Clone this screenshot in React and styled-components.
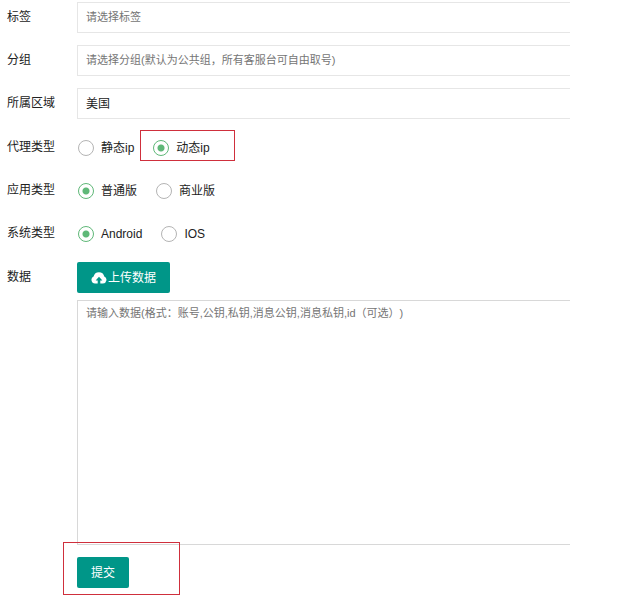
import React from "react";
import styled, { createGlobalStyle, css } from "styled-components";

const GlobalStyle = createGlobalStyle`
  *, *::before, *::after { box-sizing: border-box; }
  body {
    margin: 0;
    background: #fff;
    color: #222;
    font: 12px/16px "Liberation Sans", "Noto Sans CJK SC", sans-serif;
  }
  input, select, textarea, button { font: inherit; color: inherit; }
`;

const Form = styled.form`
  display: flex;
  flex-direction: column;
  gap: 12px;
  padding: 2px 60px 20px 7px;
`;

const Group = styled.div`
  display: flex;
  flex-direction: column;
  gap: 12px;
  padding: 1px 0;
`;

const Row = styled.div`
  display: grid;
  grid-template-columns: 70px minmax(0, 1fr);
  align-items: start;
`;

const caption = css`
  line-height: 30px;
  white-space: nowrap;
`;

const Label = styled.label`
  ${caption}
`;

const Caption = styled.span`
  ${caption}
`;

const field = css`
  display: block;
  width: 100%;
  margin: 0;
  border: 1px solid #e6e6e6;
  border-right: 0;
  border-radius: 0;
  background: #fff;
  outline: none;
  text-spacing-trim: space-all;
  &::placeholder {
    color: #757575;
    font-size: 11px;
    opacity: 1;
  }
`;

const TextField = styled.input`
  ${field}
  height: 31px;
  padding: 0 8px 2px;
`;

const DataColumn = styled.div`
  display: flex;
  flex-direction: column;
  align-items: flex-start;
  gap: 7px;
`;

const DataArea = styled.textarea`
  ${field}
  height: 245px;
  padding: 4px 8px;
  border-color: #d8d8d8;
  resize: none;
`;

const Options = styled.div`
  display: flex;
  align-items: center;
  gap: 19px;
  min-height: 31px;
  padding-left: 1px;
`;

const Option = styled.label`
  position: relative;
  display: flex;
  align-items: center;
  gap: 7px;
  white-space: nowrap;
`;

const Radio = styled.input`
  appearance: none;
  width: 16px;
  height: 16px;
  margin: 0;
  border: 1px solid #b4b4b4;
  border-radius: 50%;
  &:checked {
    border-color: #5fb878;
    background: radial-gradient(circle, #5fb878 3px, transparent 4px);
  }
`;

const Button = styled.button`
  display: inline-flex;
  align-items: center;
  gap: 1px;
  height: 31px;
  padding: 0 14px;
  border: 0;
  border-radius: 2px;
  background: #009688;
  color: #fff;
  cursor: pointer;
`;

const Submit = styled.div`
  position: relative;
  display: flex;
  align-self: flex-start;
  margin-left: 70px;
`;

const Highlight = styled.span`
  position: absolute;
  inset: ${(p) => p.$inset};
  border: 1px solid #cf2f3c;
  pointer-events: none;
`;

function CloudUpload() {
  return (
    <svg width="16" height="14" viewBox="0 0 16 14" aria-hidden="true">
      <path
        fill="currentColor"
        fillRule="evenodd"
        d="M4 12.6A3.8 3.8 0 0 1 2.6 5.4 5.5 5.5 0 0 1 13.3 5.4 3.8 3.8 0 0 1 12 12.6H9.3V9.4H11.4L8 5.8 4.6 9.4H6.7V12.6Z"
      />
    </svg>
  );
}

function Choices({ label, name, options, selected, marked }) {
  return (
    <Row role="radiogroup" aria-labelledby={`${name}-label`}>
      <Caption id={`${name}-label`}>{label}</Caption>
      <Options>
        {options.map((text) => (
          <Option key={text}>
            <Radio type="radio" name={name} value={text} defaultChecked={text === selected} />
            {text}
            {text === marked && <Highlight $inset="-10px -25px -5px -13px" />}
          </Option>
        ))}
      </Options>
    </Row>
  );
}

export default function App() {
  return (
    <>
      <GlobalStyle />
      <Form onSubmit={(e) => e.preventDefault()}>
        <Row>
          <Label htmlFor="tag">标签</Label>
          <TextField id="tag" placeholder="请选择标签" />
        </Row>
        <Row>
          <Label htmlFor="group">分组</Label>
          <TextField id="group" placeholder="请选择分组(默认为公共组，所有客服台可自由取号)" />
        </Row>
        <Row>
          <Label htmlFor="region">所属区域</Label>
          <TextField id="region" defaultValue="美国" />
        </Row>
        <Group>
          <Choices label="代理类型" name="proxy" options={["静态ip", "动态ip"]} selected="动态ip" marked="动态ip" />
          <Choices label="应用类型" name="edition" options={["普通版", "商业版"]} selected="普通版" />
          <Choices label="系统类型" name="system" options={["Android", "IOS"]} selected="Android" />
        </Group>
        <Row>
          <Label htmlFor="data">数据</Label>
          <DataColumn>
            <Button type="button">
              <CloudUpload />
              上传数据
            </Button>
            <DataArea id="data" placeholder="请输入数据(格式：账号,公钥,私钥,消息公钥,消息私钥,id（可选）)" />
          </DataColumn>
        </Row>
        <Submit>
          <Button type="submit">提交</Button>
          <Highlight $inset="-15px -51px -7px -14px" />
        </Submit>
      </Form>
    </>
  );
}
